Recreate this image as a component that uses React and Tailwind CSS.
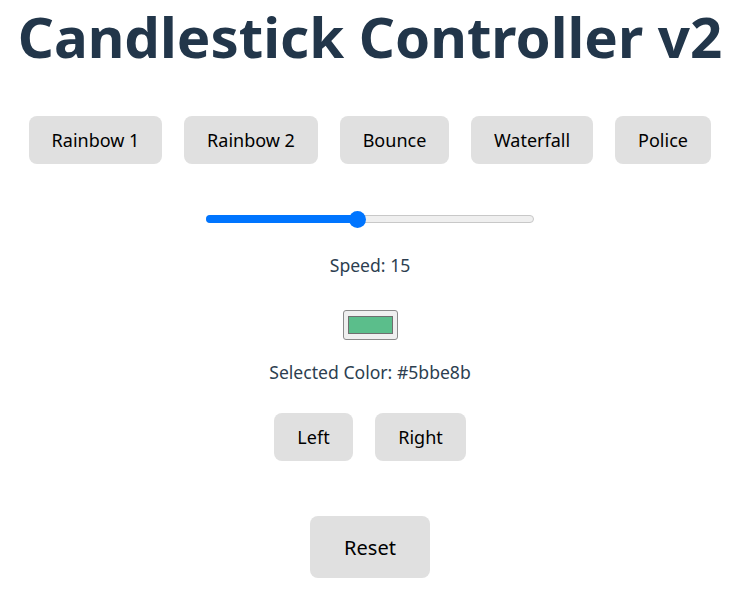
import React from "react";

function Btn({ children, className = "" }) {
  return (
    <button
      className={`bg-[#e0e0e0] rounded-lg text-black leading-none ${className}`}
    >
      {children}
    </button>
  );
}

export default function App() {
  return (
    <div
      className="w-[740px] bg-white flex flex-col items-center text-[#2c3e50]"
      style={{ fontFamily: '"Noto Sans", "Open Sans", sans-serif' }}
    >
      <h1 className="mt-[2px] text-[56.4px] font-bold leading-[70px] text-[#22364a]">
        Candlestick Controller v2
      </h1>
      <div className="mt-[44px] flex gap-[22px] text-[18px]">
        <Btn className="w-[133px] h-[48px]">Rainbow 1</Btn>
        <Btn className="w-[134px] h-[48px]">Rainbow 2</Btn>
        <Btn className="w-[109px] h-[48px]">Bounce</Btn>
        <Btn className="w-[122px] h-[48px]">Waterfall</Btn>
        <Btn className="w-[96px] h-[48px]">Police</Btn>
      </div>
      <div className="mt-[47px] relative w-[328px] h-[16px] flex items-center">
        <div className="w-full h-[8px] rounded-full bg-[#efefef] border border-[#c8c8c8]" />
        <div className="absolute left-0 top-[4px] h-[8px] w-[152px] rounded-l-full bg-[#0075ff]" />
        <div className="absolute left-[143px] top-0 w-[17px] h-[17px] rounded-full bg-[#0075ff]" />
      </div>
      <div className="mt-[26px] text-[17.6px] leading-[24px]">Speed: 15</div>
      <div className="mt-[33px] w-[55px] h-[30px] rounded-[3px] border border-[#8a8a8a] bg-[#efefef] flex items-center justify-center">
        <div className="w-[45px] h-[18px] border border-[#6e6e6e] bg-[#5bbe8b]" />
      </div>
      <div className="mt-[20px] text-[17.6px] leading-[24px]">Selected Color: #5bbe8b</div>
      <div className="mt-[29px] flex gap-[22px] text-[18px]">
        <Btn className="w-[79px] h-[48px]">Left</Btn>
        <Btn className="w-[91px] h-[48px]">Right</Btn>
      </div>
      <Btn className="mt-[55px] w-[120px] h-[62px] text-[20px] pt-[2px]">Reset</Btn>
      <div className="h-[18px]" />
    </div>
  );
}
